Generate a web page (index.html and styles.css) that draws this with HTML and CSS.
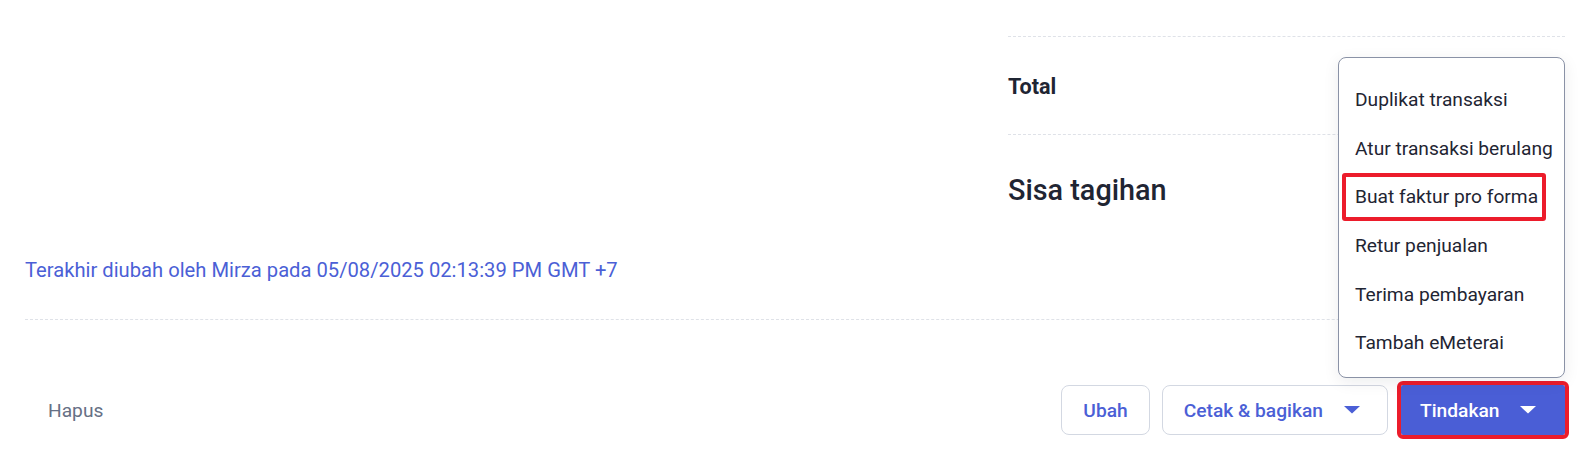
FILE: index.html
```html
<!DOCTYPE html>
<html lang="id">
<head>
<meta charset="utf-8">
<title>Faktur</title>
<link rel="stylesheet" href="styles.css">
</head>
<body>
<main class="page">
  <section class="summary">
    <div class="summary-row total">Total</div>
    <div class="summary-row due">Sisa tagihan</div>
  </section>

  <p class="audit">Terakhir diubah oleh Mirza pada 05/08/2025 02:13:39 PM GMT +7</p>

  <footer class="actions">
    <button class="btn btn-ghost" type="button">Hapus</button>
    <div class="actions-right">
      <button class="btn btn-outline" type="button">Ubah</button>
      <button class="btn btn-outline" type="button">Cetak &amp; bagikan
        <span class="caret"><svg width="16" height="8" viewBox="0 0 16 8"><polygon points="0,0 16,0 8,7.5" fill="currentColor"/></svg></span>
      </button>
      <div class="dropdown">
        <ul class="menu">
          <li class="menu-item">Duplikat transaksi</li>
          <li class="menu-item">Atur transaksi berulang</li>
          <li class="menu-item is-marked">Buat faktur pro forma</li>
          <li class="menu-item">Retur penjualan</li>
          <li class="menu-item">Terima pembayaran</li>
          <li class="menu-item">Tambah eMeterai</li>
        </ul>
        <button class="btn btn-primary is-marked-btn" type="button">Tindakan
          <span class="caret"><svg width="16" height="8" viewBox="0 0 16 8"><polygon points="0,0 16,0 8,7.5" fill="currentColor"/></svg></span>
        </button>
      </div>
    </div>
  </footer>
</main>
</body>
</html>
```

FILE: styles.css
```css
* { box-sizing: border-box; }

html, body {
  margin: 0;
  padding: 0;
  background: #ffffff;
}

body {
  font-family: Roboto, "Noto Sans", sans-serif;
  color: #1f2533;
  width: 1590px;
  height: 458px;
  overflow: hidden;
}

.page {
  padding: 36px 25px 0 25px;
}

.summary {
  margin-left: auto;
  width: 557px;
}

.summary-row {
  border-top: 1px dashed #dfe2e8;
  display: flex;
  align-items: center;
  color: #1f2533;
}

.summary-row.total {
  height: 98px;
  font-size: 21.6px;
  font-weight: 700;
  padding-top: 2px;
}

.summary-row.due {
  height: 111px;
  font-size: 28.8px;
  font-weight: 500;
  align-items: flex-start;
  padding-top: 38px;
  line-height: 34px;
}

.audit {
  margin: 12px 0 0;
  height: 62px;
  font-size: 20.2px;
  line-height: 26px;
  color: #4b5fd6;
}

.actions {
  border-top: 1px dashed #dfe2e8;
  padding-top: 65px;
  display: flex;
  justify-content: space-between;
  align-items: center;
}

.actions-right {
  display: flex;
  align-items: center;
  gap: 12px;
}

.btn {
  font-family: inherit;
  height: 50px;
  font-size: 19.2px;
  font-weight: 500;
  border-radius: 8px;
  padding: 0 21px;
  display: inline-flex;
  align-items: center;
  gap: 14px;
  cursor: pointer;
}

.btn-ghost {
  background: transparent;
  border: none;
  color: #667085;
  font-weight: 400;
  padding: 0 23px;
}

.btn-outline {
  background: #ffffff;
  border: 1px solid #d3d8e2;
  color: #4b5fd6;
}

.btn-primary {
  background: #4a5ed6;
  border: none;
  color: #ffffff;
  border-radius: 2px;
  width: 164px;
  margin-left: 1px;
  padding: 0 19px;
}

.is-marked-btn {
  outline: 4px solid #ec1c2b;
  outline-offset: 0;
  border-radius: 2px;
}

.caret {
  width: 29px;
  height: 29px;
  display: inline-flex;
  align-items: center;
  justify-content: center;
}

.dropdown {
  position: relative;
}

.menu {
  position: absolute;
  right: 0;
  bottom: calc(100% + 7px);
  width: 227px;
  margin: 0;
  padding: 17px 0 10px;
  list-style: none;
  background: #ffffff;
  border: 1px solid #8a92a6;
  border-radius: 8px;
  box-shadow: 0 4px 16px rgba(16, 24, 40, 0.08);
}

.menu-item {
  height: 48.6px;
  display: flex;
  align-items: center;
  padding-left: 16px;
  font-size: 19.2px;
  color: #1f2533;
  white-space: nowrap;
}

.menu-item.is-marked {
  margin: 0 18px 0 3px;
  padding-left: 13px;
  outline: 4px solid #ec1c2b;
  outline-offset: -4px;
  border-radius: 3px;
}
```
